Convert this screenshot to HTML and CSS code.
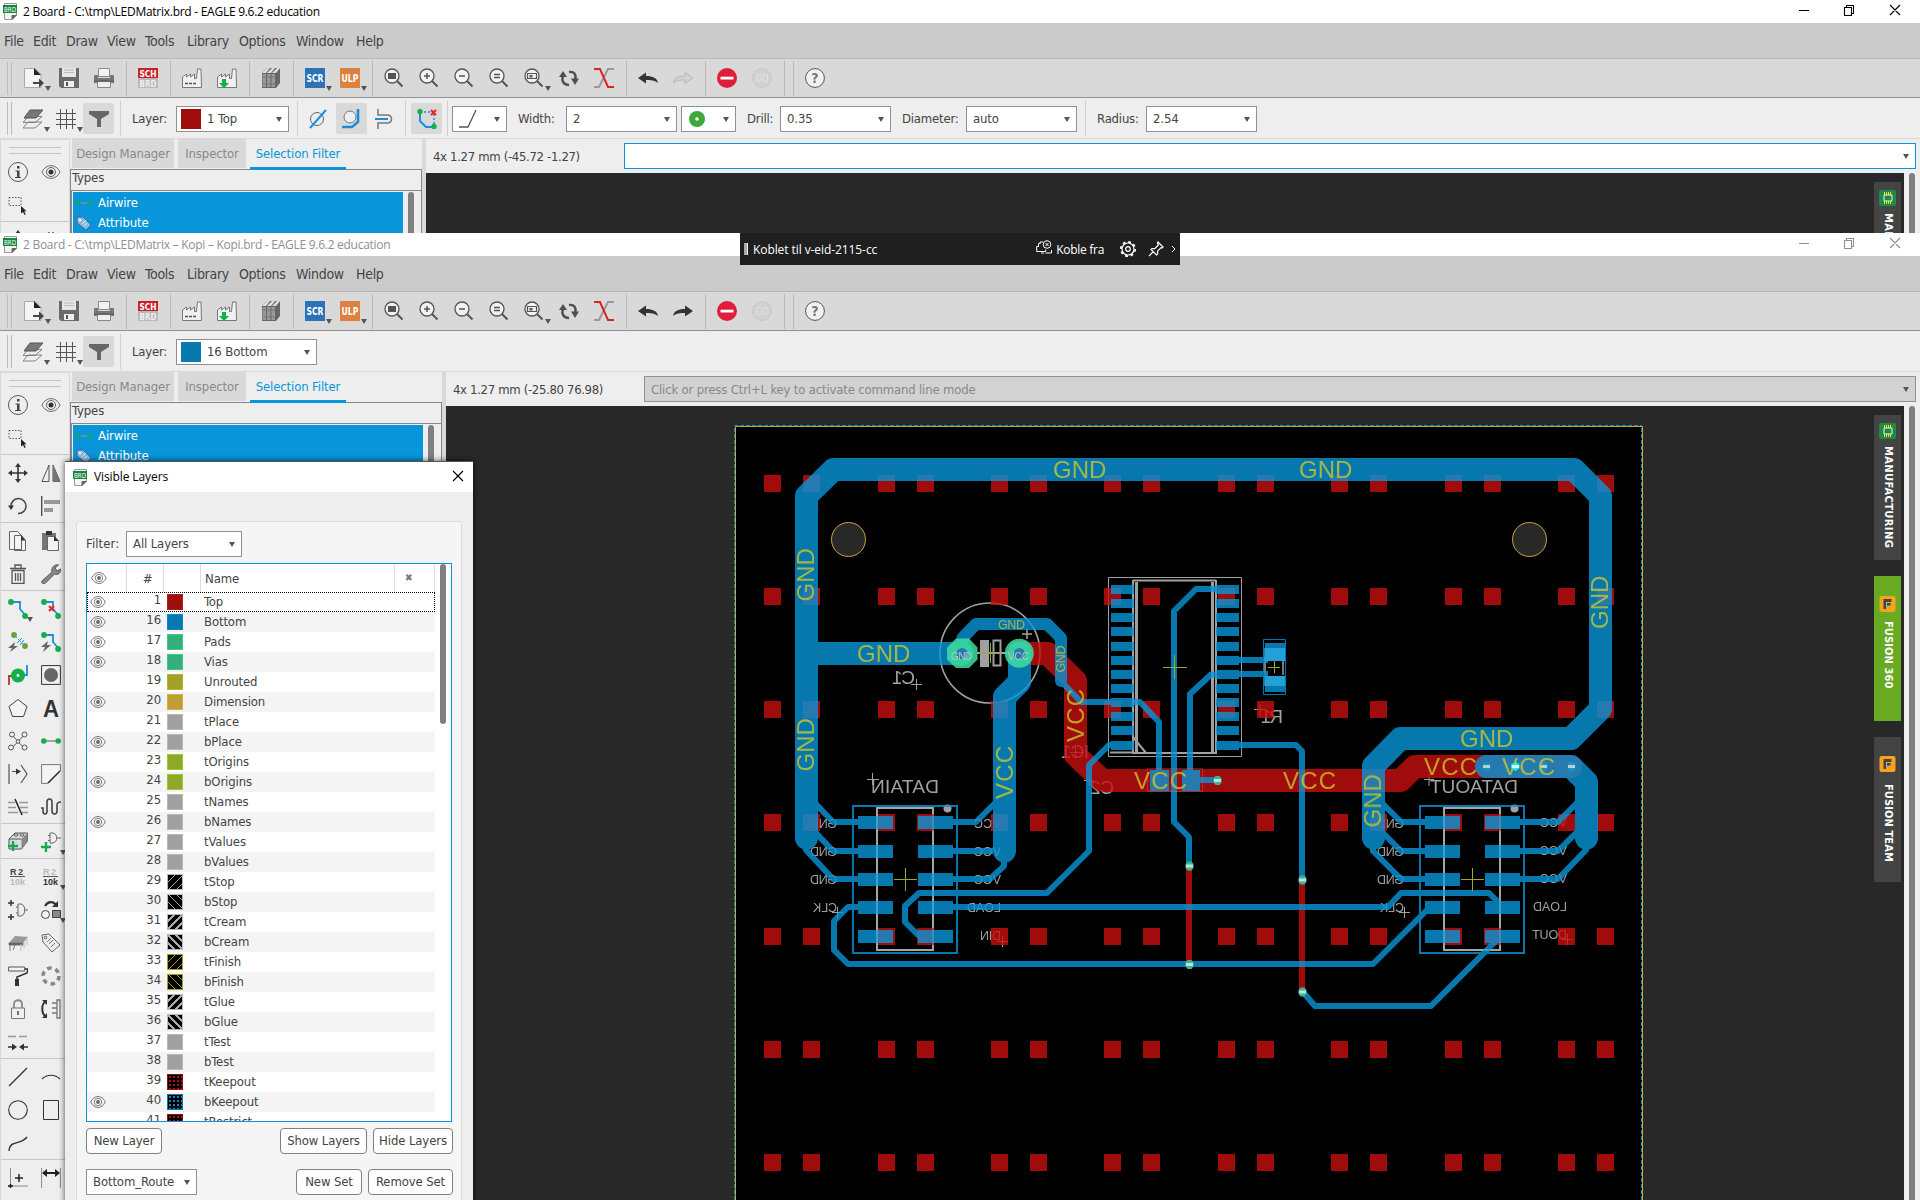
FILE: index.html
```html
<!DOCTYPE html>
<html lang="en">
<head>
<meta charset="utf-8">
<title>EAGLE board editor</title>
<link rel="stylesheet" href="styles.css">
</head>
<body>
<svg class="defs" aria-hidden="true">
<defs>
<symbol id="brd" viewBox="0 0 15 17"><path d="M1.500.5h12v12l-4 4h-8z" fill="#f4f4f4" stroke="#999"/><path d="M9 16.500v-4h4.500" fill="#666" stroke="#666"/><path d="M0 2h14v8H0z" fill="#15863c"/><text x="1" y="8.600" font-size="7" font-weight="400" fill="#fff" textLength="12" lengthAdjust="spacingAndGlyphs">BRD</text></symbol>
<symbol id="new" viewBox="0 0 20 20"><path d="M.5.5h10.500l6 6v13H.5z" fill="#f4f4f4" stroke="#999" stroke-width=".8"/><path d="M10 0l7 7h-7z" fill="#222"/><path d="M9 14h6v-3.500l5 4.500-5 4.500V16H9z" fill="#444"/></symbol>
<symbol id="save" viewBox="0 0 20 20"><path d="M0 0h20v20H2l-2-2z" fill="#6a6a6a"/><path d="M3 0h14v9H3z" fill="#e6e6e6"/><path d="M5 2h10M5 4.500h10" stroke="#bbb"/><path d="M5 13h10v6H5z" fill="#eee"/><path d="M7 14h2v4H7z" fill="#555"/></symbol>
<symbol id="print" viewBox="0 0 20 20"><path d="M4.500.5h11v8h-11z" fill="#f4f4f4" stroke="#888"/><path d="M0 7h4v3h12V7h4v8H0z" fill="#777"/><path d="M3.500 13.500h13v6h-13z" fill="#eee" stroke="#888"/><path d="M0 12h20v2H0z" fill="#666"/></symbol>
<symbol id="sch" viewBox="0 0 20 20"><path d="M0 0h20v10H0z" fill="#c91f26"/><path d="M0 10h20v10H0z" fill="#b9b9b9"/><text x="1.500" y="8.700" font-size="9.500" font-weight="700" fill="#fff" textLength="17" lengthAdjust="spacingAndGlyphs">SCH</text><text x="1.500" y="18.700" font-size="9.500" font-weight="700" fill="#eee" textLength="17" lengthAdjust="spacingAndGlyphs">BRD</text></symbol>
<symbol id="cam" viewBox="0 0 20 20"><path d="M.5 19.500V9l4-3v3l4-3v3l4-3v4.500h2L15.500 1h3.500l.5 18.500z" fill="#f1f1f1" stroke="#777"/><path d="M3 15.500h11" stroke="#555" stroke-width="1.500" stroke-dasharray="3 1"/></symbol>
<symbol id="camdl" viewBox="0 0 20 20"><path d="M.5 19.500V9l4-3v3l4-3v3l4-3v4.500h2L15.500 1h3.500l.5 18.500z" fill="#f1f1f1" stroke="#777"/><path d="M5 11h4v4h3l-5 5-5-5h3z" fill="#12b04b"/></symbol>
<symbol id="lib" viewBox="0 0 20 20"><path d="M1 5l5-5h13v15l-4 5H1z" fill="#666"/><path d="M1 5l5-5 3 0-4 5zM6 5l5-5 3 0-4 5zM11 5l5-5 3 0-4 5z" fill="#ddd"/><path d="M1.500 6h3.500v13H1.500zM6 6h3.500v13H6zM10.500 6h3.500v13h-3.500z" fill="#999"/><path d="M2 9h12M2 16h12" stroke="#777"/></symbol>
<symbol id="scr" viewBox="0 0 20 20"><path d="M0 0h20v20H0z" fill="#2b72b8"/><text x="1.500" y="13.700" font-size="10" font-weight="700" fill="#fff" textLength="17" lengthAdjust="spacingAndGlyphs">SCR</text></symbol>
<symbol id="ulp" viewBox="0 0 20 20"><path d="M0 0h20v20H0z" fill="#dc8140"/><text x="1.500" y="13.700" font-size="10" font-weight="700" fill="#fff" textLength="17" lengthAdjust="spacingAndGlyphs">ULP</text></symbol>
<symbol id="glass" viewBox="0 0 20 20"><circle cx="8" cy="8" r="7" fill="#f2f2f2" stroke="#555" stroke-width="1.300"/><path d="M13 13l5.500 5.500" stroke="#555" stroke-width="2"/></symbol>
<symbol id="zfit" viewBox="0 0 20 20"><use href="#glass"/><path d="M4 5h8v6H4z" fill="#555"/></symbol>
<symbol id="zin" viewBox="0 0 20 20"><use href="#glass"/><path d="M5 8h6M8 5v6" stroke="#555" stroke-width="1.500"/></symbol>
<symbol id="zout" viewBox="0 0 20 20"><use href="#glass"/><path d="M5 8h6" stroke="#555" stroke-width="1.500"/></symbol>
<symbol id="zeq" viewBox="0 0 20 20"><use href="#glass"/><path d="M5 6.500h6M5 9.500h6" stroke="#555" stroke-width="1.300"/></symbol>
<symbol id="zsel" viewBox="0 0 20 20"><use href="#glass"/><path d="M3.500 5.500h9v5h-9zM6 7.500h2v1.500H6z" fill="none" stroke="#555" stroke-width="1.200"/></symbol>
<symbol id="redraw" viewBox="0 0 20 20"><path d="M10 17C4 17 2 12 4.500 7M10 4c6-1 8 4 5.500 9" fill="none" stroke="#505050" stroke-width="2.400"/><path d="M0 9l4-6 4 6zM12 10.500l4 6.500 4-6.500z" fill="#505050"/></symbol>
<symbol id="rats" viewBox="0 0 20 20"><path d="M0 19h5L14 1h6" fill="none" stroke="#999" stroke-width="2"/><path d="M0 1h6l8 18h6" fill="none" stroke="#d8261c" stroke-width="2"/></symbol>
<symbol id="undo" viewBox="0 0 20 20"><path d="M0 10l8-5.500V8c7 0 11 2 12 7-4-3-7-3-12-3v3.500z"/></symbol>
<symbol id="stop" viewBox="0 0 20 20"><circle cx="10" cy="10" r="10" fill="#df1e3c"/><path d="M3.500 8.700h13v2.800h-13z" fill="#fff"/></symbol>
<symbol id="go" viewBox="0 0 20 20"><circle cx="10" cy="10" r="9.500" fill="#d1d1d1" stroke="#c8c8c8"/><text x="3.500" y="13.700" font-size="10" fill="#e3e3e3" textLength="13" lengthAdjust="spacingAndGlyphs">GO</text></symbol>
<symbol id="help" viewBox="0 0 20 20"><circle cx="10" cy="10" r="9.400" fill="#f2f2f2" stroke="#555"/><text x="10" y="15" font-size="14" font-weight="700" fill="#777" text-anchor="middle">?</text></symbol>
<symbol id="layers" viewBox="0 0 20 20"><path d="M0 19l5-6h14l-7 6zM0 13.500l5-6h14l-7 6z" fill="#eee" stroke="#777" stroke-width=".9"/><path d="M1 9l6-8h13l-7 8z" fill="#777" stroke="#555"/></symbol>
<symbol id="grid" viewBox="0 0 20 20"><path d="M4.500 0v20M10.500 0v20M16.500 0v20M0 4.500h20M0 10.500h20M0 15.500h20" stroke="#555" stroke-width="1"/></symbol>
<symbol id="funnel" viewBox="0 0 20 20"><path d="M0 2h20v3l-8 5v8H8v-8L0 5z" fill="#666"/></symbol>
<symbol id="p1" viewBox="0 0 20 20"><circle cx="9" cy="10" r="6.500" fill="none" stroke="#666"/><path d="M2 19L18 1" stroke="#1b8ddf" stroke-width="2"/></symbol>
<symbol id="p2" viewBox="0 0 20 20"><circle cx="8" cy="8" r="6" fill="#eee" stroke="#777"/><path d="M0 18h10l6-5V0" fill="none" stroke="#1b8ddf" stroke-width="2.600"/></symbol>
<symbol id="p3" viewBox="0 0 20 20"><path d="M3 0v6h9c6 0 6 8 0 8H3v6" fill="none" stroke="#777" stroke-width="1.500"/><path d="M0 10h13" stroke="#1b8ddf" stroke-width="2"/></symbol>
<symbol id="p4" viewBox="0 0 20 20"><path d="M3 3v9l6 6h8" fill="none" stroke="#1b8ddf" stroke-width="2"/><path d="M3 3h14v14" fill="none" stroke="#1b8ddf" stroke-width="1.500" stroke-dasharray="2 2"/><circle cx="3" cy="2.500" r="2.700" fill="#12b04b"/><circle cx="17" cy="17.500" r="2.700" fill="#12b04b"/><path d="M14 1l5 5M19 1l-5 5" stroke="#e22" stroke-width="2"/></symbol>
<symbol id="bend" viewBox="0 0 20 20"><path d="M1 18h9L18 1" fill="none" stroke="#555" stroke-width="1.300"/></symbol>
<symbol id="via" viewBox="0 0 20 20"><circle cx="10" cy="10" r="8" fill="#3caa3a"/><circle cx="10" cy="10" r="1.800" fill="#fff"/></symbol>
<symbol id="info" viewBox="0 0 20 20"><circle cx="10" cy="10" r="9.500" fill="none" stroke="#555"/><path d="M9 4h2.500v2.500H9zM7.500 8.500h4V15h1.500v1h-6v-1h2V9.500H7.500z" fill="#444"/></symbol>
<symbol id="eye" viewBox="0 0 20 20"><path d="M1 10c4-8.500 14-8.500 18 0-4 8.500-14 8.500-18 0z" fill="none" stroke="#666"/><circle cx="10" cy="10" r="4.500" fill="none" stroke="#666"/><circle cx="10" cy="10" r="2.500" fill="#333"/></symbol>
<symbol id="eyes" viewBox="0 0 16 12"><path d="M.7 6c3.500-7.300 11-7.300 14.600 0-3.600 7.300-11 7.300-14.600 0z" fill="none" stroke="#777"/><circle cx="8" cy="6" r="3.700" fill="none" stroke="#777" stroke-width=".9"/><circle cx="8" cy="6" r="1.900" fill="#666"/></symbol>
<symbol id="select" viewBox="0 0 20 20"><path d="M1 2.500h12v8H1z" fill="none" stroke="#555" stroke-dasharray="1.500 1.500"/><path d="M13 11v7.500l2-1.500 1.500 3 1.200-.8-1.500-3h2.300z" fill="#222"/></symbol>
<symbol id="move" viewBox="0 0 20 20"><path d="M10 2v16M2 10h16" stroke="#333" stroke-width="1.600"/><path d="M10 0L7 4h6zM10 20l-3-4h6zM0 10l4-3v6zM20 10l-4-3v6z" fill="#333"/></symbol>
<symbol id="mirror" viewBox="0 0 20 20"><path d="M8 2v16.500H1zM12 2v16.500h7z" fill="#eee" stroke="#555"/><path d="M12 2v16.500h7z" fill="#777"/></symbol>
<symbol id="rotate" viewBox="0 0 20 20"><path d="M3 10a7.500 7.500 0 1 1 7 7.500" fill="none" stroke="#444" stroke-width="1.500"/><path d="M0 9.500h6l-3 4.500z" fill="#333"/></symbol>
<symbol id="align" viewBox="0 0 20 20"><path d="M.7 0v20" stroke="#444" stroke-width="1.300"/><path d="M3 4h16v4H3zM3 12h9v4H3z" fill="#999"/></symbol>
<symbol id="copy" viewBox="0 0 20 20"><path d="M1.500.5h8l4 4v14h-12zM6.500 4.500h7l4 5v10h-11z" fill="#f3f3f3" stroke="#666"/><path d="M13 4.500v5h5z" fill="#333"/></symbol>
<symbol id="paste" viewBox="0 0 20 20"><path d="M1 2h14v17H1z" fill="#777"/><path d="M5 0h6v4H5z" fill="#333"/><path d="M6.500 5.500h7l4 5v9h-11z" fill="#f3f3f3" stroke="#666"/><path d="M13 5v5h5z" fill="#333"/></symbol>
<symbol id="trash" viewBox="0 0 20 20"><path d="M2 4.500h16M7 4V1h6v3M4 6.500h12v13H4zM7.500 9v8M10 9v8M12.500 9v8" fill="none" stroke="#555" stroke-width="1.300"/></symbol>
<symbol id="wrench" viewBox="0 0 20 20"><path d="M1 17L11 8c-1-5 3-8 6.500-7L14 4l2 3 3.500-2c1 4-3 6.500-6 5L4 19.500c-2 1-4-.5-3-2.500z" fill="#888" stroke="#555"/></symbol>
<symbol id="route" viewBox="0 0 20 20"><path d="M3 3h9v7l6 7" fill="none" stroke="#1b8ddf" stroke-width="1.800"/><circle cx="3" cy="3" r="2.900" fill="#12b04b"/><circle cx="17.100" cy="17" r="2.900" fill="#12b04b"/></symbol>
<symbol id="ripup" viewBox="0 0 20 20"><use href="#route"/><path d="M8 7l5 5M13 7l-5 5" stroke="#e22" stroke-width="2"/></symbol>
<symbol id="fan" viewBox="0 0 20 20"><path d="M6 3l12 12" stroke="#1b8ddf" stroke-dasharray="4 2"/><circle cx="6" cy="3" r="2.900" fill="#65a343"/><circle cx="17" cy="14" r="2.900" fill="#65a343"/><path d="M9 11l5-5M12 13l4-5" stroke="#1b8ddf"/><path d="M7 10l-7 6 4 0-2 4 8-6-4 0z" fill="#666"/></symbol>
<symbol id="auto" viewBox="0 0 20 20"><use href="#route"/><path d="M7 9l-7 6 4 0-2 5 8-7-4 0z" fill="#666"/></symbol>
<symbol id="viat" viewBox="0 0 20 20"><path d="M1 20V11h6" fill="none" stroke="#b33" stroke-width="1.800"/><path d="M13 10h6V0" fill="none" stroke="#1b8ddf" stroke-width="1.800"/><circle cx="10" cy="10.500" r="7" fill="#12b04b"/><circle cx="10" cy="10.500" r="1.400" fill="#fff"/></symbol>
<symbol id="hole" viewBox="0 0 20 20"><path d="M.6.6h18.800v18.800H.6z" fill="#f2f2f2" stroke="#333"/><circle cx="10" cy="10" r="7" fill="#666"/></symbol>
<symbol id="poly" viewBox="0 0 20 20"><path d="M10 1.500l9 7L15.500 18.500h-11L1 8.500z" fill="#f4f4f4" stroke="#444"/></symbol>
<symbol id="texta" viewBox="0 0 20 20"><text x="2" y="18.500" font-family="Liberation Sans" font-size="24" font-weight="700" fill="#333" textLength="16" lengthAdjust="spacingAndGlyphs">A</text></symbol>
<symbol id="net" viewBox="0 0 20 20"><path d="M4 4l12 13M16 4L4 17" stroke="#555"/><g fill="#eee" stroke="#555"><circle cx="4" cy="3.500" r="2.500"/><circle cx="16.500" cy="3.500" r="2.500"/><circle cx="3" cy="16.500" r="2.500"/><circle cx="16.500" cy="16.500" r="2.500"/><circle cx="10" cy="10.500" r="1.800"/></g></symbol>
<symbol id="wire" viewBox="0 0 20 20"><path d="M2 10h16" stroke="#888" stroke-width="1.500"/><circle cx="2.800" cy="10" r="2.800" fill="#12b04b"/><circle cx="17.200" cy="10" r="2.800" fill="#12b04b"/></symbol>
<symbol id="split" viewBox="0 0 20 20"><path d="M1 0v20M13 1l6 9-6 9M4 7.500h6" fill="none" stroke="#555" stroke-width="1.200"/><path d="M8 4.500l5 3-5 3z" fill="#333"/></symbol>
<symbol id="miter" viewBox="0 0 20 20"><path d="M7 19.400H.6V.6h18.800V7" fill="#f4f4f4" stroke="#777"/><path d="M7 19l12-12" stroke="#222" stroke-width="1.500"/></symbol>
<symbol id="slice" viewBox="0 0 20 20"><path d="M0 5.500h7M0 10.500h8M0 15.500h10M11 5.500h9M12 10.500h8M14 15.500h6" stroke="#999" stroke-width="1.500"/><path d="M7 2l7 16" stroke="#222" stroke-width="1.500"/></symbol>
<symbol id="meander" viewBox="0 0 20 20"><path d="M0 11h2v3c0 4 4 4 4 0V5c0-4 5-4 5 0v9c0 4 5 4 5 0V8c0-2 2-3 4-3" fill="none" stroke="#444" stroke-width="1.600"/></symbol>
<symbol id="add" viewBox="0 0 20 20"><path d="M1 7l6-6h12.500v8l-6 8H1z" fill="#ddd" stroke="#555"/><path d="M13.500 7v10l6-8V1z" fill="#888"/><path d="M1 7h12.500" stroke="#555"/><g fill="#eee" stroke="#555"><ellipse cx="8" cy="3" rx="2" ry="1.200"/><ellipse cx="14" cy="3" rx="2" ry="1.200"/></g><path d="M0 14h10M5 9v10" stroke="#1aa94a" stroke-width="2.400"/></symbol>
<symbol id="gate" viewBox="0 0 20 20"><path d="M9 1h3c5 1 5 9 0 10H9zM16 6h4M7 3.500h2M7 8.500h2" fill="#eee" stroke="#666"/><path d="M0 15h10M5 10v10" stroke="#1aa94a" stroke-width="2.400"/></symbol>
<symbol id="r2" viewBox="0 0 20 20"><text x="2" y="8" font-family="Liberation Sans" font-size="9" font-weight="700" fill="#444" textLength="13">R2</text><path d="M2 9.500h15" stroke="#555"/><text x="2" y="18" font-family="Liberation Sans" font-size="9" font-weight="700" fill="#bbb" textLength="15">10k</text></symbol>
<symbol id="r10" viewBox="0 0 20 20"><text x="2" y="8" font-family="Liberation Sans" font-size="9" font-weight="700" fill="#bbb" textLength="13">R2</text><path d="M2 9.500h15" stroke="#555"/><text x="2" y="18" font-family="Liberation Sans" font-size="9" font-weight="700" fill="#333" textLength="15">10k</text></symbol>
<symbol id="invoke" viewBox="0 0 20 20"><path d="M10 4h3c5 1 5 11 0 12h-3zM17 10h3M8 7h2M8 13h2" fill="#eee" stroke="#666"/><path d="M0 3h6M3 0v6M0 17h6M3 14v6" stroke="#333" stroke-width="1.500"/></symbol>
<symbol id="replace" viewBox="0 0 20 20"><circle cx="4.500" cy="14.500" r="4" fill="#f4f4f4" stroke="#444"/><path d="M11.500 10.500h8v7h-8z" fill="#888" stroke="#345"/><path d="M4 6c3-5 8-5 11-1" fill="none" stroke="#333" stroke-width="2.200"/><path d="M17 1v6h-6z" fill="#333"/></symbol>
<symbol id="chip" viewBox="0 0 20 20"><path d="M1 10L7 3l13 1-5 6z" fill="#999"/><path d="M1 10l14 0v2L1 12zM2 12v6M7 12l-2 5" fill="#555" stroke="#777"/><path d="M13 11v7M16 9v6M19 6v6" stroke="#bbb"/></symbol>
<symbol id="tag" viewBox="0 0 20 20"><path d="M1 2l7-1 11 11-8 7L2 9z" fill="#eee" stroke="#666"/><circle cx="4.500" cy="4.500" r="1.300" fill="none" stroke="#555"/><path d="M6 9l4-4M8 11l4-4M10 14l4-4" stroke="#777"/></symbol>
<symbol id="roller" viewBox="0 0 20 20"><path d="M.6 1h16v4H.6z" fill="#f4f4f4" stroke="#555"/><path d="M17 3h3l-1 4-10 4v3" fill="none" stroke="#333" stroke-width="1.600"/><path d="M7 13h4v7H7z" fill="#333"/></symbol>
<symbol id="ring" viewBox="0 0 20 20"><circle cx="10" cy="10" r="8" fill="none" stroke="#888" stroke-width="3.500" stroke-dasharray="4.500 3.900"/></symbol>
<symbol id="lock" viewBox="0 0 20 20"><path d="M3.500 9h13v10.500h-13z" fill="#f0f0f0" stroke="#777"/><path d="M6 9V5c0-5 8-5 8 0v4" fill="none" stroke="#888" stroke-width="1.800"/><path d="M10 12v4" stroke="#444" stroke-width="1.500"/></symbol>
<symbol id="swap" viewBox="0 0 20 20"><path d="M5 2C0 5 0 14 5 18" fill="none" stroke="#333" stroke-width="2"/><path d="M1 1h5v5zM1 19h5v-5z" fill="#333"/><path d="M11 4h5M11 9h5M11 14h5M16 1h3v18h-3z" fill="none" stroke="#777" stroke-width="1.300"/></symbol>
<symbol id="optim" viewBox="0 0 20 20"><path d="M0 4.500h8M11 4.500h8" stroke="#999" stroke-width="1.500"/><path d="M0 15h5M15 15h5" stroke="#333" stroke-width="1.500"/><path d="M4 11.500l5 3.500-5 3.500zM16 11.500l-5 3.500 5 3.500z" fill="#333"/></symbol>
<symbol id="line" viewBox="0 0 20 20"><path d="M1 19L19 1" stroke="#333" stroke-width="1.200"/></symbol>
<symbol id="arc" viewBox="0 0 20 20"><path d="M1 12c5-5 13-5 18 0" fill="none" stroke="#333" stroke-width="1.200"/></symbol>
<symbol id="circle" viewBox="0 0 20 20"><circle cx="10" cy="10" r="9.300" fill="none" stroke="#333" stroke-width="1.100"/></symbol>
<symbol id="rect" viewBox="0 0 20 20"><path d="M2.500.5h15v19h-15z" fill="none" stroke="#333"/></symbol>
<symbol id="spline" viewBox="0 0 20 20"><path d="M1 18c1-12 11-5 18-14" fill="none" stroke="#333" stroke-width="1.400"/></symbol>
<symbol id="mark" viewBox="0 0 20 20"><path d="M2.500 0v20M0 18h20" stroke="#888"/><path d="M7 10h8M11 6v8M0 18h5M2.500 16v4" stroke="#222" stroke-width="1.500"/></symbol>
<symbol id="dim" viewBox="0 0 20 20"><path d="M.6 0v20M19.400 0v20" stroke="#888"/><path d="M2 5h16" stroke="#222" stroke-width="2"/><path d="M1 5l5-4v8zM19 5l-5-4v8z" fill="#222"/></symbol>
<symbol id="chipgreen" viewBox="0 0 17 16"><rect width="17" height="16" rx="2" fill="#1f8a45"/><path d="M5.500 2v12M7.500 2v12M9.500 2v12M11.500 2v12" stroke="#f3e600"/><path d="M5 5h8v6H5z" fill="#1f8a45" stroke="#eee"/></symbol>
<symbol id="fus" viewBox="0 0 16 16"><rect width="16" height="16" rx="2" fill="#f6a21b"/><path d="M4 3h3v10H4zM4 3h8v3H4zM6 7h5v3H6z" fill="#444"/><path d="M7 6v7M11 10H7" stroke="#a9a9a9"/></symbol>
<symbol id="winbtns" viewBox="0 0 110 23"><path d="M3 10.500h10M48.500 7.500h7v8h-7zM50.500 7.500v-2h7v8h-2M94 5l10 10M104 5L94 15" fill="none" stroke="currentColor" stroke-width="1.100"/></symbol>
<symbol id="airwire" viewBox="0 0 16 12"><path d="M2 6h12" stroke="#6a9ab8" stroke-width="1.500"/><circle cx="2.500" cy="6" r="2.300" fill="#14a26a"/><circle cx="13.500" cy="6" r="2.300" fill="#14a26a"/></symbol>
<symbol id="attr" viewBox="0 0 16 14"><path d="M1 1l6 0 8 8-5 5L1 7z" fill="#8db8dd" stroke="#3c6a94"/><circle cx="4" cy="4" r="1.200" fill="#fff"/><path d="M6 8l4-4M8 10l3-3" stroke="#dfeefa"/></symbol>
</defs>
</svg>

<section class="window first">
  <header class="title"><svg class="brd"><use href="#brd"/></svg><span>2 Board - C:\tmp\LEDMatrix.brd - EAGLE 9.6.2 education</span><svg class="winbtns"><use href="#winbtns"/></svg></header>
  <nav class="menu"><span>File</span><span>Edit</span><span>Draw</span><span>View</span><span>Tools</span><span>Library</span><span>Options</span><span>Window</span><span>Help</span></nav>
  <div class="toolbar">
    <i class="grip"></i><b class="drop"><svg><use href="#new"/></svg></b><svg><use href="#save"/></svg><svg><use href="#print"/></svg><i class="sep"></i><svg><use href="#sch"/></svg><i class="sep"></i><svg><use href="#cam"/></svg><svg><use href="#camdl"/></svg><i class="sep"></i><svg><use href="#lib"/></svg><i class="sep"></i><b class="drop"><svg><use href="#scr"/></svg></b><b class="drop"><svg><use href="#ulp"/></svg></b><i class="sep"></i><svg><use href="#zfit"/></svg><svg><use href="#zin"/></svg><svg><use href="#zout"/></svg><svg><use href="#zeq"/></svg><b class="drop"><svg><use href="#zsel"/></svg></b><svg><use href="#redraw"/></svg><svg><use href="#rats"/></svg><i class="sep"></i><svg class="dark"><use href="#undo"/></svg><svg class="redo off"><use href="#undo"/></svg><i class="sep"></i><svg><use href="#stop"/></svg><svg><use href="#go"/></svg><i class="sep"></i><i class="sep near"></i><svg><use href="#help"/></svg>
  </div>
  <div class="params">
    <i class="grip"></i><b class="drop lay"><svg><use href="#layers"/></svg></b><b class="drop grd"><svg><use href="#grid"/></svg></b><b class="pressed"><svg><use href="#funnel"/></svg></b><i class="sep p1"></i>
    <label class="l-layer">Layer:</label><div class="combo c113"><i class="sw red"></i>1 Top</div><i class="sep p2"></i>
    <svg class="m10"><use href="#p1"/></svg><b class="pressed m8"><svg><use href="#p2"/></svg></b><svg class="m8"><use href="#p3"/></svg><i class="sep p3"></i><b class="pressed m5"><svg><use href="#p4"/></svg></b><i class="sep p4"></i>
    <div class="combo c55 m4"><svg><use href="#bend"/></svg></div><label class="l-width">Width:</label><div class="combo c111">2</div><div class="combo c55 m4"><svg class="via"><use href="#via"/></svg></div>
    <label class="l-drill">Drill:</label><div class="combo c111">0.35</div><label class="l-dia">Diameter:</label><div class="combo c111">auto</div><i class="sep p5"></i><label class="l-rad">Radius:</label><div class="combo c111">2.54</div>
  </div>
  <div class="main">
    <aside class="tools"><svg><use href="#info"/></svg><svg><use href="#eye"/></svg><svg><use href="#select"/></svg><i></i><hr><svg><use href="#move"/></svg><svg><use href="#mirror"/></svg></aside>
    <aside class="panel"><div class="tabs"><span>Design Manager</span><span>Inspector</span><span class="on">Selection Filter</span></div>
      <div class="types"><h4>Types</h4><div class="list"><ul><li><svg><use href="#airwire"/></svg>Airwire</li><li><svg><use href="#attr"/></svg>Attribute</li><li></li></ul><i class="bar"></i></div></div></aside>
    <div class="work"><div class="cmd"><span>4x 1.27 mm (-45.72 -1.27)</span><div class="combo line active"></div></div>
      <div class="view"><div class="canvas"><div class="sidetabs"><div class="stab"><svg><use href="#chipgreen"/></svg><span>MANUFACTURING</span></div></div></div><i class="vbar"></i></div></div>
  </div>
</section>

<section class="window second">
  <header class="title"><svg class="brd"><use href="#brd"/></svg><span>2 Board - C:\tmp\LEDMatrix – Kopi – Kopi.brd - EAGLE 9.6.2 education</span><svg class="winbtns"><use href="#winbtns"/></svg></header>
  <nav class="menu"><span>File</span><span>Edit</span><span>Draw</span><span>View</span><span>Tools</span><span>Library</span><span>Options</span><span>Window</span><span>Help</span></nav>
  <div class="toolbar">
    <i class="grip"></i><b class="drop"><svg><use href="#new"/></svg></b><svg><use href="#save"/></svg><svg><use href="#print"/></svg><i class="sep"></i><svg><use href="#sch"/></svg><i class="sep"></i><svg><use href="#cam"/></svg><svg><use href="#camdl"/></svg><i class="sep"></i><svg><use href="#lib"/></svg><i class="sep"></i><b class="drop"><svg><use href="#scr"/></svg></b><b class="drop"><svg><use href="#ulp"/></svg></b><i class="sep"></i><svg><use href="#zfit"/></svg><svg><use href="#zin"/></svg><svg><use href="#zout"/></svg><svg><use href="#zeq"/></svg><b class="drop"><svg><use href="#zsel"/></svg></b><svg><use href="#redraw"/></svg><svg><use href="#rats"/></svg><i class="sep"></i><svg class="dark"><use href="#undo"/></svg><svg class="redo dark"><use href="#undo"/></svg><i class="sep"></i><svg><use href="#stop"/></svg><svg><use href="#go"/></svg><i class="sep"></i><i class="sep near"></i><svg><use href="#help"/></svg>
  </div>
  <div class="params">
    <i class="grip"></i><b class="drop lay"><svg><use href="#layers"/></svg></b><b class="drop grd"><svg><use href="#grid"/></svg></b><b class="pressed"><svg><use href="#funnel"/></svg></b><i class="sep p1"></i>
    <label class="l-layer">Layer:</label><div class="combo c141"><i class="sw blue"></i>16 Bottom</div>
  </div>
  <div class="main">
    <aside class="tools">
      <svg><use href="#info"/></svg><svg><use href="#eye"/></svg><svg><use href="#select"/></svg><i></i><hr>
      <svg><use href="#move"/></svg><svg><use href="#mirror"/></svg><svg><use href="#rotate"/></svg><svg><use href="#align"/></svg><hr>
      <svg><use href="#copy"/></svg><svg><use href="#paste"/></svg><svg><use href="#trash"/></svg><svg><use href="#wrench"/></svg><hr>
      <b class="drop"><svg><use href="#route"/></svg></b><svg><use href="#ripup"/></svg><svg><use href="#fan"/></svg><svg><use href="#auto"/></svg><svg><use href="#viat"/></svg><svg><use href="#hole"/></svg><svg><use href="#poly"/></svg><svg><use href="#texta"/></svg><svg><use href="#net"/></svg><svg><use href="#wire"/></svg><svg><use href="#split"/></svg><svg><use href="#miter"/></svg><svg><use href="#slice"/></svg><svg><use href="#meander"/></svg><hr>
      <svg><use href="#add"/></svg><b class="drop"><svg><use href="#gate"/></svg></b><hr>
      <svg><use href="#r2"/></svg><b class="drop"><svg><use href="#r10"/></svg></b><svg><use href="#invoke"/></svg><b class="drop"><svg><use href="#replace"/></svg></b><svg><use href="#chip"/></svg><svg><use href="#tag"/></svg><svg><use href="#roller"/></svg><svg><use href="#ring"/></svg><svg><use href="#lock"/></svg><svg><use href="#swap"/></svg><svg><use href="#optim"/></svg><i></i><hr>
      <svg><use href="#line"/></svg><svg><use href="#arc"/></svg><svg><use href="#circle"/></svg><svg><use href="#rect"/></svg><svg><use href="#spline"/></svg><i></i><hr>
      <svg><use href="#mark"/></svg><svg><use href="#dim"/></svg>
    </aside>
    <aside class="panel"><div class="tabs"><span>Design Manager</span><span>Inspector</span><span class="on">Selection Filter</span></div>
      <div class="types"><h4>Types</h4><div class="list"><ul><li><svg><use href="#airwire"/></svg>Airwire</li><li><svg><use href="#attr"/></svg>Attribute</li><li></li></ul><i class="bar"></i></div></div></aside>
    <div class="work"><div class="cmd"><span>4x 1.27 mm (-25.80 76.98)</span><div class="combo line">Click or press Ctrl+L key to activate command line mode</div></div>
      <div class="view"><div class="canvas">
<svg class="board" viewBox="446 406 1458 794">
<defs>
<path id="padrow" d="M764 0h17v17h-17zM803 0h17v17h-17zM878 0h17v17h-17zM917 0h17v17h-17zM991 0h17v17h-17zM1030 0h17v17h-17zM1104 0h17v17h-17zM1143 0h17v17h-17zM1218 0h17v17h-17zM1257 0h17v17h-17zM1331 0h17v17h-17zM1370 0h17v17h-17zM1445 0h17v17h-17zM1484 0h17v17h-17zM1558 0h17v17h-17zM1597 0h17v17h-17z"/>
<path id="conpads" d="M858 816h35v13h-35zM858 845h35v13h-35zM858 873h35v13h-35zM858 901h35v13h-35zM858 930h35v13h-35zM918 816h35v13h-35zM918 845h35v13h-35zM918 873h35v13h-35zM918 901h35v13h-35zM918 930h35v13h-35z"/>
<path id="icpads" d="M1111 585h23v9h-23zM1111 599h23v9h-23zM1111 613h23v9h-23zM1111 627h23v9h-23zM1111 642h23v9h-23zM1111 656h23v9h-23zM1111 670h23v9h-23zM1111 684h23v9h-23zM1111 698h23v9h-23zM1111 712h23v9h-23zM1111 726h23v9h-23zM1111 741h23v9h-23z"/>
<g id="consilk"><path d="M877 808h56v142h-56z" fill="none" stroke-width="2"/><circle cx="947.500" cy="808.500" r="4" fill="#c8c8c8" stroke="none"/></g>
<g id="viam"><path d="M-4-2l2-2.500h4l2 2.500v4l-2 2.500h-4l-2-2.500z" fill="#35b88f"/><path d="M-3.500-1.500h7v3h-7z" fill="#c5dde0"/></g>
<g id="viab"><path d="M-4-2l2-2.500h4l2 2.500v4l-2 2.500h-4l-2-2.500z" fill="#1594c4"/><path d="M-3.500-1.500h7v3h-7z" fill="#b9cfd6"/></g>
</defs>
<path d="M735.500 426.500h907v780h-907z" fill="#000" stroke="none"/>
<path d="M734.500 1200V425.500H1642" fill="none" stroke="#0a8bc6" stroke-dasharray="4 2"/>
<path d="M735.500 1200V426.500H1642.500V1200" fill="none" stroke="#c9a43c"/>
<path d="M1641.500 1200V425" fill="none" stroke="#0a8bc6" stroke-dasharray="4 2"/>
<g fill="#282828" stroke="#c9a43c"><circle cx="848.500" cy="539.500" r="17"/><circle cx="1529.500" cy="539.500" r="17"/></g>
<g class="silk">
<g fill="none" stroke="#c8c8c8"><circle cx="990" cy="653" r="50" stroke-width="1.600"/><path d="M977 653h32" stroke-width="2"/><path d="M993.500 640.500h7v25h-7z" stroke-width="2"/><path d="M1022 634h10M1027 629v10" stroke-width="1.600"/><path d="M1108.500 577.500h133v179h-133z"/><path d="M1133 580.500h83M1133 753h83M1133 580v174M1216 580v174" stroke-width="2"/><path d="M1136.500 582v170M1212.500 582v170" stroke-width="3"/><path d="M1133 737l13 16M1110 752.500h24" stroke-width="2"/><path d="M1265 661v14M1283 661v14" stroke-width="1.500"/><use href="#consilk"/><use href="#consilk" x="567"/>
<path d="M911 684.500h11M916.500 679v11M1254 709.500h12M1260 704v12M867 779.500h12M872.500 773v12M1424 779.500h10M1429 774v12M832 912.500h11M837.500 907v11M997 941.500h11M1002.500 936v11M1399 912.500h11M1404.500 907v11M1562 939.500h11M1567.500 934v11M1084 780.500h10M1089.500 775v11M1070 752.500h12M1075.500 746v12"/></g>
<path d="M980 640h9v27h-9z" fill="#c8c8c8"/>
<g class="big"><text transform="translate(939 793) scale(-1 1)" textLength="68">DATAIN</text><text transform="translate(1518 793) scale(-1 1)" textLength="88">DATAOUT</text><text transform="translate(915 684) scale(-1 1)" textLength="23">C1</text><text transform="translate(1283 723) scale(-1 1)" textLength="22">R1</text><text transform="translate(1114 794) scale(-1 1)" textLength="24">C2</text><text transform="translate(1089 758) scale(-1 1)" textLength="28">IC1</text></g>
<g class="small"><text transform="translate(837 828) scale(-1 1)" textLength="27">GND</text><text transform="translate(837 856) scale(-1 1)" textLength="27">GND</text><text transform="translate(837 884) scale(-1 1)" textLength="27">GND</text><text transform="translate(837 912) scale(-1 1)" textLength="24">CLK</text><text transform="translate(1001 828) scale(-1 1)" textLength="27">VCC</text><text transform="translate(1001 856) scale(-1 1)" textLength="27">VCC</text><text transform="translate(1001 884) scale(-1 1)" textLength="27">VCC</text><text transform="translate(1001 912) scale(-1 1)" textLength="34">LOAD</text><text transform="translate(1001 940) scale(-1 1)" textLength="21">DIN</text>
<text transform="translate(1404 828) scale(-1 1)" textLength="27">GND</text><text transform="translate(1404 856) scale(-1 1)" textLength="27">GND</text><text transform="translate(1404 884) scale(-1 1)" textLength="27">GND</text><text transform="translate(1404 912) scale(-1 1)" textLength="24">CLK</text><text transform="translate(1567 827) scale(-1 1)" textLength="27">VCC</text><text transform="translate(1567 855) scale(-1 1)" textLength="27">VCC</text><text transform="translate(1567 883) scale(-1 1)" textLength="27">VCC</text><text transform="translate(1567 911) scale(-1 1)" textLength="34">LOAD</text><text transform="translate(1567 939) scale(-1 1)" textLength="35">DOUT</text></g>
</g>
<g class="top"><use href="#padrow" y="475"/><use href="#padrow" y="588"/><use href="#padrow" y="701"/><use href="#padrow" y="814"/><use href="#padrow" y="928"/><use href="#padrow" y="1041"/><use href="#padrow" y="1154"/>
<path d="M1019 653.500H1047.500L1075.500 681V755L1102.500 780.500H1400.500L1415 766.500H1571" class="w23"/><path d="M1189 866V964M1302 880V991" class="w6"/></g>
<g class="bottom">
<path class="w23" d="M806.500 838V496L833.500 469.500H1574L1600.500 496V709L1571 738.500H1400.500L1373.500 766V838M806.500 653.500H962M1019.500 653V682L1004.500 697V851M1486.500 766.500H1571L1586.500 782V838"/>
<path class="w12" d="M962.500 653V638L976 624H1047L1061 638V681"/>
<path class="w6" d="M1061 681L1081 702H1140L1159 722V780M1217 589H1196L1174 611V822L1189 837V866M1217 674.500H1211L1190 694V780M1239 660H1268M1239 674H1268M1190 780H1217M1111 745H1109L1089 765V851L1047 893H919L905 906V922L921 938M1239 745H1296L1302 751V880M1302 991L1315 1006H1431L1498 939M950 907H1388L1401 893H1489L1502 906M862 907H848L834 921V950L848 964H1373L1432 905M815 803L833 822H860M815 832L833 851H860M806 848V850L833 879H860M950 822H976L995 803M950 851H993M950 879H990L1004 866V855M1380 801L1401 822H1427M1380 830L1401 851H1427M1373 845V851L1401 879H1427M1518 822H1558L1580 800M1518 851H1558L1580 829M1518 879H1558L1586 850V843"/>
<g stroke="none" fill="#0997d9"><use href="#conpads"/><use href="#conpads" x="567"/><use href="#icpads"/><use href="#icpads" x="105"/><path d="M1150 770h19v21h-19zM1182 770h18v21h-18zM1265 643h20v18h-20zM1265 676h20v16h-20z"/></g>
<path d="M853 806h104v147H853zM1420 806h104v147H1420z" stroke-width="2"/><path d="M1263.500 639.500h22v55h-22z" stroke-width="1"/>
</g>
<path d="M1264 648h21v13h-21zM1264 676h21v10h-21z" fill="#2fb0e8" opacity=".7"/>
<path d="M877 808h56v142h-56zM1444 808h56v142h-56z" fill="none" stroke="#c8c8c8" stroke-width="2" opacity=".14"/>
<path d="M1147.500 768.500h55v23h-55z" fill="none" stroke="#d66" opacity=".35"/>
<g class="pads"><path d="M956 638.500h13l8.500 9v12l-8.500 8.500h-13l-9-8.500v-12z"/><circle cx="1019.300" cy="653.300" r="14.500"/></g>
<g fill="#2878b0"><circle cx="962" cy="653.500" r="5.500"/><circle cx="1019.300" cy="653.500" r="5.500"/></g>
<g class="tiny"><text x="951" y="660" textLength="21">GND</text><text x="1008" y="660" textLength="21">VCC</text></g>
<path d="M894 879.500h23M905.500 868v23M1461 879.500h23M1472.500 868v23M1163 667.500h24M1174.500 655v24M1268 667.500h12M1274.500 661v12M980 653.500h20M990.500 643v20" stroke="#98aa2c" fill="none"/>
<use href="#viam" x="1189.500" y="866"/><use href="#viam" x="1189.500" y="964.500"/><use href="#viam" x="1302.500" y="880"/><use href="#viam" x="1302.500" y="992"/><use href="#viam" x="1217.500" y="780.500"/><use href="#viab" x="1486.500" y="766.500"/><use href="#viab" x="1543.500" y="766.500"/><use href="#viab" x="1571.500" y="766.500"/>
<g class="nets"><text x="1053" y="478">GND</text><text x="1299" y="478">GND</text><text x="857" y="662">GND</text><text x="1460" y="747">GND</text><text transform="translate(814 601.500) rotate(-90)">GND</text><text transform="translate(814 771.500) rotate(-90)">GND</text><text transform="translate(1608 629) rotate(-90)">GND</text><text transform="translate(1381 827.500) rotate(-90)">GND</text><text transform="translate(1013 799) rotate(-90)" textLength="53">VCC</text><text transform="translate(1084 742) rotate(-90)" textLength="53">VCC</text><text x="1134" y="789" textLength="53">VCC</text><text x="1283" y="789" textLength="53">VCC</text><text x="1424" y="775" textLength="53">VCC</text><text x="1502" y="775" textLength="53">VCC</text></g>
<path d="M1511 764.500l4.500-2.500 4 2.500v3.500l-4 3-4.500-3z" fill="#20f5c0"/><path d="M1512 765h7v3h-7z" fill="#d5fff5"/>
<g class="nets sm"><text x="998" y="628.500" textLength="27">GND</text><text transform="translate(1065 672.500) rotate(-90)" textLength="27">GND</text></g>
</svg>
<div class="sidetabs"><div class="stab"><svg><use href="#chipgreen"/></svg><span>MANUFACTURING</span></div><div class="stab green"><svg><use href="#fus"/></svg><span>FUSION 360</span></div><div class="stab"><svg><use href="#fus"/></svg><span>FUSION TEAM</span></div></div>
      </div><i class="vbar"></i></div></div>
  </div>
</section>

<section class="dialog">
  <header><svg class="brd"><use href="#brd"/></svg><span>Visible Layers</span><svg class="close" viewBox="0 0 12 12"><path d="M1 1l10 10M11 1L1 11" stroke="#000" stroke-width="1.200"/></svg></header>
  <div class="frame">
    <div class="filter"><label>Filter:</label><div class="combo c116">All Layers</div></div>
    <div class="table"><div class="rows">
      <div class="row head"><svg class="e"><use href="#eyes"/></svg><span class="n">#</span><i></i><span class="name">Name</span><span class="x">✖</span></div>
      <div class="row sel"><svg class="e"><use href="#eyes"/></svg><span class="n">1</span><i class="s red"></i><span class="name">Top</span></div>
      <div class="row"><svg class="e"><use href="#eyes"/></svg><span class="n">16</span><i class="s blue"></i><span class="name">Bottom</span></div>
      <div class="row"><svg class="e"><use href="#eyes"/></svg><span class="n">17</span><i class="s grn"></i><span class="name">Pads</span></div>
      <div class="row"><svg class="e"><use href="#eyes"/></svg><span class="n">18</span><i class="s grn"></i><span class="name">Vias</span></div>
      <div class="row"><b class="e"></b><span class="n">19</span><i class="s yel"></i><span class="name">Unrouted</span></div>
      <div class="row"><svg class="e"><use href="#eyes"/></svg><span class="n">20</span><i class="s gold"></i><span class="name">Dimension</span></div>
      <div class="row"><b class="e"></b><span class="n">21</span><i class="s"></i><span class="name">tPlace</span></div>
      <div class="row"><svg class="e"><use href="#eyes"/></svg><span class="n">22</span><i class="s"></i><span class="name">bPlace</span></div>
      <div class="row"><b class="e"></b><span class="n">23</span><i class="s lime"></i><span class="name">tOrigins</span></div>
      <div class="row"><svg class="e"><use href="#eyes"/></svg><span class="n">24</span><i class="s lime"></i><span class="name">bOrigins</span></div>
      <div class="row"><b class="e"></b><span class="n">25</span><i class="s"></i><span class="name">tNames</span></div>
      <div class="row"><svg class="e"><use href="#eyes"/></svg><span class="n">26</span><i class="s"></i><span class="name">bNames</span></div>
      <div class="row"><b class="e"></b><span class="n">27</span><i class="s"></i><span class="name">tValues</span></div>
      <div class="row"><b class="e"></b><span class="n">28</span><i class="s"></i><span class="name">bValues</span></div>
      <div class="row"><b class="e"></b><span class="n">29</span><i class="s up"></i><span class="name">tStop</span></div>
      <div class="row"><b class="e"></b><span class="n">30</span><i class="s dn"></i><span class="name">bStop</span></div>
      <div class="row"><b class="e"></b><span class="n">31</span><i class="s up thick"></i><span class="name">tCream</span></div>
      <div class="row"><b class="e"></b><span class="n">32</span><i class="s dn thick"></i><span class="name">bCream</span></div>
      <div class="row"><b class="e"></b><span class="n">33</span><i class="s up fin"></i><span class="name">tFinish</span></div>
      <div class="row"><b class="e"></b><span class="n">34</span><i class="s dn fin"></i><span class="name">bFinish</span></div>
      <div class="row"><b class="e"></b><span class="n">35</span><i class="s up thick"></i><span class="name">tGlue</span></div>
      <div class="row"><b class="e"></b><span class="n">36</span><i class="s dn thick"></i><span class="name">bGlue</span></div>
      <div class="row"><b class="e"></b><span class="n">37</span><i class="s"></i><span class="name">tTest</span></div>
      <div class="row"><b class="e"></b><span class="n">38</span><i class="s"></i><span class="name">bTest</span></div>
      <div class="row"><b class="e"></b><span class="n">39</span><i class="s dotr"></i><span class="name">tKeepout</span></div>
      <div class="row"><svg class="e"><use href="#eyes"/></svg><span class="n">40</span><i class="s dotb"></i><span class="name">bKeepout</span></div>
      <div class="row"><b class="e"></b><span class="n">41</span><i class="s dotr"></i><span class="name">tRestrict</span></div>
    </div><i class="tbar"></i></div>
    <div class="btns"><button class="b76">New Layer</button><button class="b87 push">Show Layers</button><button class="b80">Hide Layers</button></div>
    <div class="btns last"><div class="combo c111">Bottom_Route</div><button class="b66 push">New Set</button><button class="b85">Remove Set</button></div>
  </div>
</section>

<div class="remote"><i></i><span>Koblet til v-eid-2115-cc</span>
<svg class="dis" viewBox="0 0 16 14"><path d="M3.500 3.500h-1v3H.7v5h9v-2M9.500 13h6v-3M5 13h3M7 2H4v2" fill="none" stroke="#fff"/><circle cx="11" cy="4.500" r="3.800" fill="#1f1f1f" stroke="#fff"/><path d="M9.500 3l3 3M12.500 3l-3 3" stroke="#fff"/></svg><span class="kf">Koble fra</span>
<svg class="gear" viewBox="0 0 18 18"><circle cx="9" cy="9" r="6" fill="none" stroke="#fff" stroke-width="1.200"/><circle cx="9" cy="9" r="7.200" fill="none" stroke="#fff" stroke-width="1.700" stroke-dasharray="2.800 2.850"/><circle cx="9" cy="9" r="2.300" fill="none" stroke="#fff" stroke-width="1.200"/></svg>
<svg class="pin" viewBox="0 0 16 16"><path d="M10 1l5 5-1 1-1-.3-3.500 3.500.2 2.800-1.200 1L3 8.500l1-1 2.800.2L10.300 4 9.500 2zM5.500 10.500L1 15" fill="none" stroke="#fff" stroke-width="1.200"/></svg><svg class="chev" viewBox="0 0 5 8"><path d="M1 1l3 3-3 3" fill="none" stroke="#fff"/></svg></div>
</body>
</html>
```
FILE: styles.css
```css
* { box-sizing: border-box; }
body { margin: 0; width: 1920px; height: 1200px; overflow: hidden; position: relative; background: #eee; color: #444; font: 13px/16px "DejaVu Sans Condensed", "DejaVu Sans", sans-serif; font-stretch: condensed; letter-spacing: -.12px; }
svg { display: block; flex: none; letter-spacing: 0; }
i, b { display: block; flex: none; font-style: normal; }
.defs { position: absolute; width: 0; height: 0; }

/* window frame */
.window { display: flex; flex-direction: column; overflow: hidden; background: #eee; }
.first { height: 233px; }
.second { height: 967px; }
.title { height: 23px; background: #fff; display: flex; align-items: center; padding-left: 3px; font: 12px/23px "Open Sans", sans-serif; color: #000; flex: none; }
.title span { margin-left: 5px; white-space: nowrap; letter-spacing: -.27px; }
.brd { width: 15px; height: 17px; font-family: "DejaVu Sans", sans-serif; }
.winbtns { width: 110px; height: 23px; margin-left: auto; margin-right: 14px; margin-top: -1px; }
.second .title { color: #8f8f8f; }
.menu { height: 36px; background: #cbcbcb; border-bottom: 1px solid #b7b7b7; display: flex; flex: none; padding-left: 4px; font-size: 14px; line-height: 37px; letter-spacing: -.3px; }
.menu span { flex: none; white-space: nowrap; }
.menu span:nth-child(1) { width: 29px; }
.menu span:nth-child(2) { width: 33px; }
.menu span:nth-child(3) { width: 41px; }
.menu span:nth-child(4) { width: 38px; }
.menu span:nth-child(5) { width: 42px; }
.menu span:nth-child(6) { width: 52px; }
.menu span:nth-child(7) { width: 57px; }
.menu span:nth-child(8) { width: 60px; }

/* toolbars */
.toolbar { height: 39px; background: #d9d9d9; border-bottom: 1px solid #919191; display: flex; align-items: center; flex: none; padding-left: 7px; }
.toolbar svg { width: 20px; height: 20px; margin-right: 15px; }
.toolbar .grip { margin-right: 12px; }
.toolbar .sep { margin: 0 11px 0 -3px; height: 35px; background: #b9b9b9; }
.toolbar .sep.near { margin-left: -3px; }
.sep { width: 1px; height: 35px; background: #cfcfcf; }
.grip { width: 5px; height: 33px; border: solid #bcbcbc; border-width: 0 1px; }
.drop { position: relative; }
.drop::after { content: ""; position: absolute; left: 21px; top: 18px; border: solid transparent; border-width: 5px 3px 0; border-top-color: #555; }
.dark { fill: #333; }
.redo { transform: scaleX(-1); }
.off { fill: #d2d2d2; stroke: #b8b8b8; }
.params { height: 41px; border-bottom: 1px solid #d9d9d9; display: flex; align-items: center; flex: none; padding: 1px 0 0 7px; }
.params > svg, .pressed svg, .lay svg, .grd svg { width: 20px; height: 20px; }
.params .lay { margin: 0 13px 0 11px; }
.params .grd { margin-right: 8px; }
.params .grip { margin-top: 0; }
.pressed { width: 31px; height: 31px; background: #d9d9d9; border-radius: 2px; display: grid; place-items: center; margin-left: -1px; }
.p1 { margin: 0 11px 0 6px; }
.p2 { margin-left: 8px; }
.p3 { margin-left: 10px; }
.p4 { margin-left: 5px; }
.p5 { margin-left: 8px; }
.m10 { margin-left: 10px; }
.m8 { margin-left: 8px; }
.m5 { margin-left: 5px; }
.m4 { margin-left: 4px; }
label { flex: none; white-space: nowrap; letter-spacing: -.2px; padding-top: 1px; }
.l-layer { width: 44px; }
.l-width { width: 59px; padding-left: 11px; }
.l-drill { width: 44px; padding-left: 11px; }
.l-dia { width: 75px; padding-left: 11px; }
.l-rad { width: 60px; padding-left: 11px; }
.combo { position: relative; flex: none; height: 26px; border: 1px solid #919191; background: #fff; display: flex; align-items: center; padding-left: 6px; white-space: nowrap; }
.combo::after { content: ""; position: absolute; right: 6px; top: 10px; border: solid transparent; border-width: 5px 3px 0; border-top-color: #555; }
.combo svg { width: 20px; height: 20px; margin-left: -1px; }
.c55 { width: 55px; } .c111 { width: 111px; } .c113 { width: 113px; } .c116 { width: 116px; } .c141 { width: 141px; }
.sw { width: 20px; height: 20px; margin: 0 6px 0 -2px; }
.red { background: #a00b0b; }
.blue { background: #0779b0; }

/* main area */
.main { display: flex; flex: 1; min-height: 0; }
.tools { width: 70px; flex: none; border: 1px solid #d9d9d9; border-width: 1px 1px 0 1px; display: grid; grid-template-columns: 33px 33px; grid-auto-rows: max-content; align-content: start; justify-items: center; padding: 15px 0 0 0; position: relative; }
.tools::before { content: ""; position: absolute; left: 8px; top: 7px; width: 52px; height: 5px; border: solid #c4c4c4; border-width: 1px 0; }
.tools > svg { width: 20px; height: 20px; margin: 6.5px 0; }
.tools .drop { margin: 6.5px 0; }
.tools .drop svg { width: 20px; height: 20px; }
.tools .drop::after { left: 19px; }
.tools hr { grid-column: 1 / 3; width: 68px; height: 1px; border: 0; margin: 0 0 1px; background: #c6c6c6; justify-self: start; }
.panel { flex: none; width: 352px; display: flex; flex-direction: column; }
.second .panel { width: 372px; }
.tabs { display: flex; height: 30px; padding-left: 2px; align-items: flex-start; flex: none; }
.tabs span { height: 29px; line-height: 30px; background: #d9d9d9; color: #888; text-align: center; margin-right: 4px; width: 102px; }
.tabs span:nth-child(2) { width: 68px; }
.tabs .on { width: 96px; height: 31px; background: none; color: #0895d9; border-bottom: 3px solid #0895d9; position: relative; z-index: 1; }
.types { border: 1px solid #828790; flex: 1; min-height: 0; display: flex; flex-direction: column; }
h4 { margin: 0; height: 20px; font: inherit; line-height: 15px; padding-left: 1px; flex: none; }
.list { border: 1px solid #828790; border-right: 0; flex: 1; background: #eee; display: flex; padding: 1px 0 0 1px; }
.list ul { list-style: none; margin: 0; padding: 1px 0 0; flex: 1; background: #0895d9; color: #fff; }
.list li { height: 20px; display: flex; align-items: center; padding-left: 3px; }
.list li svg { width: 16px; height: 14px; margin-right: 6px; }
.bar { width: 6px; background: #808080; border-radius: 3px 3px 0 0; margin: 0 7px 0 5px; }
.work { flex: 1; border-left: 4px solid #d9d9d9; display: flex; flex-direction: column; min-width: 0; }
.cmd { height: 34px; display: flex; align-items: center; flex: none; padding-left: 7px; }
.cmd span { width: 191px; flex: none; padding-top: 2px; letter-spacing: -.33px; white-space: nowrap; }
.line { flex: 1; margin-right: 4px; background: #d2d2d2; color: #888; letter-spacing: -.17px; padding-top: 1px; }
.active { background: #fff; border-color: #0895d9; }
.view { flex: 1; display: flex; min-height: 0; }
.canvas { flex: 1; background: #282828; position: relative; overflow: hidden; }
.vbar { width: 6px; margin: 0 5px; background: #808080; border-radius: 3px 3px 0 0; }
.board { width: 1458px; height: 794px; font-family: "Liberation Sans", Arial, sans-serif; }
.sidetabs { position: absolute; right: 3px; top: 9px; display: flex; flex-direction: column; gap: 16px; }
.stab { width: 27px; height: 145px; background: #444; display: flex; flex-direction: column; align-items: center; color: #fff; padding-top: 8px; }
.stab svg { width: 17px; height: 16px; }
.stab span { writing-mode: vertical-rl; margin-top: 7px; font: 600 11px/14px "DejaVu Sans", sans-serif; font-stretch: condensed; letter-spacing: .42px; white-space: nowrap; }
.stab.green { background: #6aaa23; }
.stab:nth-child(n+2) { padding-top: 20px; }
.stab:nth-child(n+2) span { margin-top: 9px; letter-spacing: .1px; }
.stab:nth-child(3) { padding-top: 19px; }
.stab:nth-child(3) span { margin-top: 12px; letter-spacing: .1px; }

/* board artwork */
.silk { opacity: .8; }
.silk text { fill: #c8c8c8; }
.big text { font-size: 19px; }
.small text { font-size: 12.5px; }
.tiny text { font-size: 10px; fill: #b9c4c4; }
.top { opacity: .8; fill: #c80e0e; stroke: none; }
.top path { stroke: none; }
.top path.w23, .top path.w6 { fill: none; stroke: #c80e0e; }
.bottom { opacity: .8; fill: none; stroke: #0997d9; }
.w23 { stroke-width: 23; stroke-linejoin: round; stroke-linecap: round; }
.w12 { stroke-width: 12; stroke-linejoin: round; stroke-linecap: round; }
.w6 { stroke-width: 6; stroke-linejoin: round; }
.pads { fill: #3de0a0; opacity: .85; }
.nets { fill: #cbc62c; opacity: .8; font-size: 24px; }
.sm { font-size: 12.5px; }

/* layer dialog */
.dialog { position: absolute; left: 65px; top: 461px; width: 408px; height: 760px; background: #eee; border-top: 1px solid #555; box-shadow: 0 0 6px rgba(0,0,0,.7); }
.dialog header { height: 30px; background: #fff; display: flex; align-items: center; padding-left: 8px; font: 12px/30px "Open Sans", sans-serif; color: #000; }
.dialog header span { margin-left: 6px; letter-spacing: -.1px; }
.close { width: 12px; height: 12px; margin: 0 9px 2px auto; }
.frame { margin: 29px 11px 0 11px; height: 700px; background: #f5f5f5; border: 1px solid #dcdcdc; border-radius: 3px; padding: 9px 8px 0 9px; }
.filter { display: flex; align-items: center; }
.filter label { width: 40px; letter-spacing: .1px; padding: 0; }
.table { margin-top: 6px; width: 366px; height: 559px; border: 1px solid #0895d9; background: #fff; display: flex; overflow: hidden; }
.rows { width: 348px; flex: none; }
.row { height: 20px; display: flex; align-items: center; }
.row:nth-child(odd) { background: #f4f4f4; }
.row.head { height: 28px; background: #fff; }
.e { flex: none; width: 16px; height: 12px; margin: 0 16px 0 3px; }
.n { flex: none; width: 39px; text-align: right; position: relative; top: -2px; }
.s { width: 16px; height: 16px; margin: 0 21px 0 6px; background: #a0a0a0; border: 1px solid #b8b8b8; }
.s.red { background: #a00b0b; border-color: #b51b1b; }
.s.blue { background: #0779b0; border-color: #0a8bc6; }
.grn { background: #35ae7a; border-color: #3cc88b; }
.yel { background: #a2a026; border-color: #b8b430; }
.gold { background: #bd9f35; border-color: #d6b040; }
.lime { background: #8ea82a; border-color: #a3c432; }
.up { background: repeating-linear-gradient(135deg, #000 0 4.6px, #aaa 4.6px 5.6px); }
.dn { background: repeating-linear-gradient(45deg, #000 0 4.6px, #aaa 4.6px 5.6px); }
.up.thick { background: repeating-linear-gradient(135deg, #000 0 3.4px, #aaa 3.4px 5.6px); }
.dn.thick { background: repeating-linear-gradient(45deg, #000 0 3.4px, #aaa 3.4px 5.6px); }
.up.fin { background: repeating-linear-gradient(135deg, #000 0 4.6px, #a2a026 4.6px 5.6px); border-color: #a2a026; }
.dn.fin { background: repeating-linear-gradient(45deg, #000 0 4.6px, #a2a026 4.6px 5.6px); border-color: #a2a026; }
.dotr { background: radial-gradient(circle, #b01010 .7px, #000 1px) 0 0 / 4px 4px; border-color: #a00b0b; }
.dotb { background: radial-gradient(circle, #0a8bc6 .7px, #000 1px) 0 0 / 4px 4px; border-color: #0779b0; }
.sel { outline: 1px dotted #000; outline-offset: -1px; }
.head .e { margin: 0 19px 0 4px; }
.head .n { width: 37px; text-align: center; padding-left: 5px; top: 0; border-left: 1px solid #ddd; height: 28px; line-height: 29px; }
.head i { width: 37px; height: 28px; border-left: 1px solid #ddd; }
.head .name { flex: none; width: 195px; height: 28px; line-height: 29px; border: solid #ddd; border-width: 0 1px; padding-left: 4px; }
.head .x { flex: 1; height: 28px; line-height: 28px; border-right: 1px solid #ddd; padding-left: 10px; font-size: 10px; color: #777; }
.tbar { width: 6px; height: 160px; background: #808080; border-radius: 3px; margin-left: 5px; }
.btns { display: flex; gap: 6px; margin-top: 6px; }
.btns.last { margin-top: 15px; }
button { height: 26px; border: 1px solid #808080; border-radius: 4px; background: #fff; color: inherit; font: inherit; font-stretch: inherit; letter-spacing: inherit; padding: 0; white-space: nowrap; }
.push { margin-left: auto; }
.b66 { width: 66px; } .b76 { width: 76px; } .b80 { width: 80px; } .b85 { width: 85px; } .b87 { width: 87px; }

/* remote session bar */
.remote { position: absolute; left: 740px; top: 233px; width: 440px; height: 32px; background: #1f1f1f; color: #fff; display: flex; align-items: center; font: 12px/32px "Open Sans", sans-serif; letter-spacing: -.08px; }
.remote span { padding-top: 1px; }
.remote i { width: 4px; height: 12px; background: #aaa; border-right: 1px solid #eee; margin: 0 5px 0 4px; }
.dis { width: 16px; height: 14px; margin: 0 4px 4px auto; }
.remote .kf { letter-spacing: -.3px; }
.gear { width: 18px; height: 18px; margin: 0 11px 0 15px; }
.pin { width: 16px; height: 16px; margin-right: 7px; }
.chev { width: 5px; height: 8px; margin-right: 4px; }
```
